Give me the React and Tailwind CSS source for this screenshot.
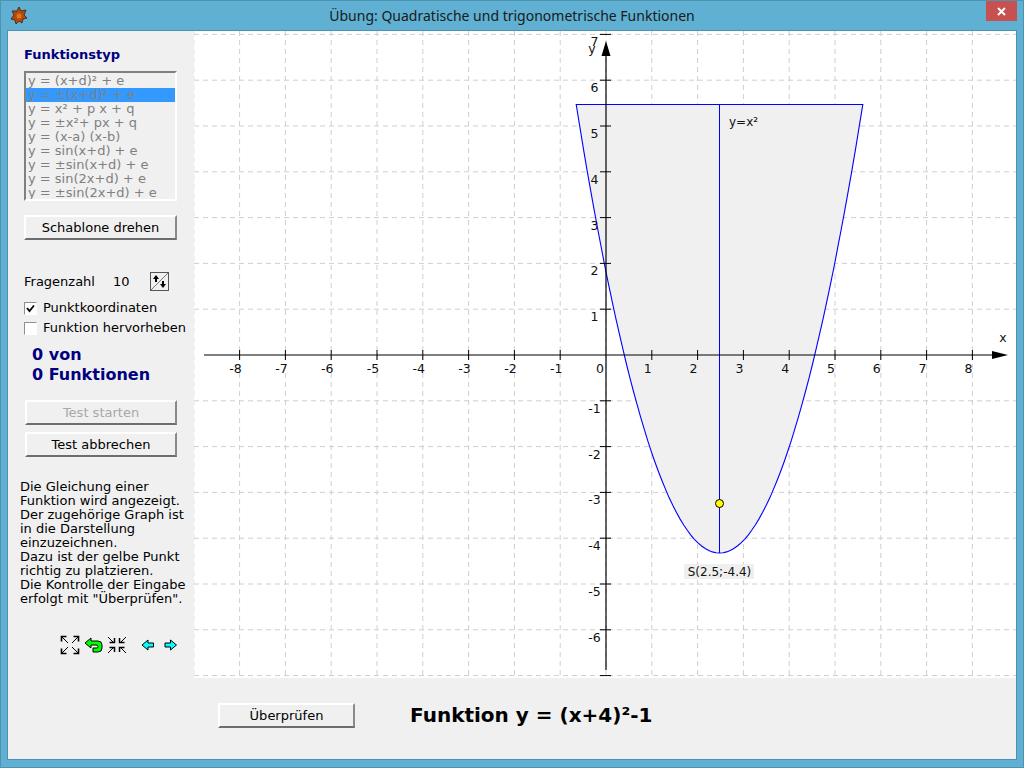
const U = 45.8;
const OX = 412; // origin inside the graph svg (606 - 194)
const OY = 324; // 355 - 31

const funktionen = [
  "y = (x+d)² + e",
  "y = ±(x+d)² + e",
  "y = x² + p x + q",
  "y = ±x²+ px + q",
  "y = (x-a) (x-b)",
  "y = sin(x+d) + e",
  "y = ±sin(x+d) + e",
  "y = sin(2x+d) + e",
  "y = ±sin(2x+d) + e",
];

const VERTEX_X = 525.5;
const VERTEX_Y = 522;
const TOP_Y = 73.5;

function parabola() {
  const half = Math.sqrt((VERTEX_Y - TOP_Y) * U);
  const pts = [];
  for (let i = 0; i <= 80; i++) {
    const x = VERTEX_X - half + (2 * half * i) / 80;
    const y = VERTEX_Y - ((x - VERTEX_X) * (x - VERTEX_X)) / U;
    pts.push(`${x.toFixed(1)},${y.toFixed(1)}`);
  }
  return pts.join(" ");
}

function Graph() {
  const xs = [-9, -8, -7, -6, -5, -4, -3, -2, -1, 0, 1, 2, 3, 4, 5, 6, 7, 8, 9];
  const ys = [-7, -6, -5, -4, -3, -2, -1, 1, 2, 3, 4, 5, 6, 7];
  return (
    <svg width="822" height="647" className="block" style={{ fontFamily: "'DejaVu Sans', sans-serif" }}>
      {xs.map((n) => (
        <line key={n} x1={OX + n * U} x2={OX + n * U} y1="0" y2="647" stroke="#cfcfcf" strokeDasharray="5 4" />
      ))}
      {ys.map((n) => (
        <line key={n} x1="0" x2="822" y1={OY - n * U} y2={OY - n * U} stroke="#cfcfcf" strokeDasharray="5 4" />
      ))}

      <polygon points={parabola()} fill="#efefef" fillOpacity="0.95" stroke="#0000ff" strokeWidth="1.1" />
      <line x1={VERTEX_X} x2={VERTEX_X} y1={TOP_Y} y2={VERTEX_Y} stroke="#0000ff" strokeWidth="1" />

      {/* axes */}
      <line x1="10" x2="800" y1={OY} y2={OY} stroke="#000" strokeWidth="1.2" />
      <line x1={OX} x2={OX} y1="24" y2="639" stroke="#000" strokeWidth="1.2" />
      <polygon points="814,324 798,320 798,328" fill="#000" />
      <polygon points={`${OX},10 ${OX - 4.5},25 ${OX + 4.5},25`} fill="#000" />

      {xs.filter((n) => n !== 0 && Math.abs(n) < 9).map((n) => (
        <g key={n}>
          <line x1={OX + n * U} x2={OX + n * U} y1={OY - 5} y2={OY + 5} stroke="#000" />
          <text x={OX + n * U - 4} y={OY + 18} textAnchor="middle" fontSize="12.5" fill="#111">{n}</text>
        </g>
      ))}
      {ys.map((n) => (
        <g key={n}>
          <line x1={OX - 6} x2={OX + 5} y1={OY - n * U} y2={OY - n * U} stroke="#000" />
          <text x={OX - 11.5} y={OY - n * U + 12} textAnchor="middle" fontSize="12.5" fill="#111">{n}</text>
        </g>
      ))}
      <text x={OX - 6} y={OY + 18} textAnchor="middle" fontSize="12.5" fill="#111">0</text>
      <text x="809" y="311" textAnchor="middle" fontSize="12.5" fill="#111">x</text>
      <text x={OX - 14} y="22" textAnchor="middle" fontSize="12.5" fill="#111">y</text>
      <text x="535" y="95" fontSize="12" fill="#111">y=x²</text>

      <rect x="490" y="533" width="70" height="15" fill="#efefef" />
      <text x={VERTEX_X} y="545" textAnchor="middle" fontSize="12" fill="#111">S(2.5;-4.4)</text>

      <circle cx={VERTEX_X} cy="472.5" r="4" fill="#ffff00" stroke="#000" />
    </svg>
  );
}

function Knopf({ children, disabled, className }) {
  return (
    <button
      className={`h-[25px] bg-[#f0f0f0] border-2 border-t-white border-l-white border-r-[#8a8a8a] border-b-[#6d6d6d] text-[13px] leading-none ${
        disabled ? "text-[#a8a8a8]" : "text-black"
      } ${className}`}
    >
      {children}
    </button>
  );
}

function Haken({ checked, label }) {
  return (
    <div className="flex items-center h-[20px]">
      <span className="w-[13px] h-[13px] bg-white border border-[#8e8f8f] border-b-white border-r-white flex items-center justify-center">
        {checked && (
          <svg width="9" height="9" viewBox="0 0 9 9">
            <path d="M1 4 L3.5 7 L8 1.5" fill="none" stroke="#000" strokeWidth="1.8" />
          </svg>
        )}
      </span>
      <span className="ml-[6px] text-[13px] text-black whitespace-nowrap">{label}</span>
    </div>
  );
}

function Werkzeuge() {
  return (
    <svg width="118" height="20" viewBox="0 0 118 20" className="block">
      {/* vergrößern */}
      <g stroke="#000" fill="none" strokeWidth="1">
        <path d="M2 2 L8 8 M18 2 L12 8 M2 18 L8 12 M18 18 L12 12" />
        <path d="M1.5 6.5 V1.5 H6.5 M13.5 1.5 H18.5 V6.5 M1.5 13.5 V18.5 H6.5 M18.5 13.5 V18.5 H13.5" strokeWidth="1.6" />
      </g>
      {/* zurück */}
      <path
        d="M25 10 L31 5 V8 H38 Q42 8 42 12 V15 Q42 19 38 19 H33 V15 H37 Q38 15 38 13.5 Q38 12 36 12 H31 V15 Z"
        transform="translate(0 -2)"
        fill="#00ff00"
        stroke="#000"
      />
      {/* verkleinern */}
      <g stroke="#000" fill="none" strokeWidth="1">
        <path d="M48 2 L54 8 M66 2 L60 8 M48 18 L54 12 M66 18 L60 12" />
        <path d="M49.5 7.5 H54.5 V3 M59.5 3 V7.5 H64.5 M49.5 12.5 H54.5 V17 M59.5 17 V12.5 H64.5" strokeWidth="1.5" />
      </g>
      {/* Pfeile */}
      <path d="M82 10 L88 5 V8 H93.5 V12 H88 V15 Z" fill="#00ffff" stroke="#000" />
      <path d="M116.5 10 L110.5 5 V8 H105 V12 H110.5 V15 Z" fill="#00ffff" stroke="#000" />
    </svg>
  );
}

function LinkeSeite() {
  return (
    <aside className="w-[186px] shrink-0 bg-[#f0f0f0] flex flex-col pl-[16px]">
      <h2 className="mt-[16px] h-[16px] text-[13px] leading-[16px] font-bold text-[#000080]">Funktionstyp</h2>

      <ul className="mt-[8px] w-[153px] h-[130px] bg-[#f0f0f0] border-2 border-t-[#808080] border-l-[#808080] border-r-white border-b-white overflow-hidden pt-[1px]">
        {funktionen.map((f, i) => (
          <li
            key={f}
            className={`h-[14px] pl-[2px] text-[13px] leading-[14px] text-[#808080] whitespace-nowrap ${
              i === 1 ? "bg-[#3399ff]" : ""
            }`}
          >
            {f}
          </li>
        ))}
      </ul>

      <Knopf className="mt-[14px] w-[153px]">Schablone drehen</Knopf>

      <div className="mt-[32px] h-[19px] flex items-center text-[13px] text-black">
        <span className="w-[89px]">Fragenzahl</span>
        <span className="w-[37px]">10</span>
        <svg width="19" height="19" viewBox="0 0 19 19" className="block">
          <rect x="0.5" y="0.5" width="18" height="18" fill="#f0f0f0" stroke="#555" />
          <path d="M1 18 L18 1" stroke="#777" />
          <path d="M6 3 L9 7 H7 V10 H5 V7 H3 Z M13 16 L16 12 H14 V9 H12 V12 H10 Z" fill="#000" />
        </svg>
      </div>

      <div className="mt-[7px] flex flex-col">
        <Haken checked label="Punktkoordinaten" />
        <Haken label="Funktion hervorheben" />
      </div>

      <div className="mt-[7px] ml-[8px] text-[16px] leading-[20px] font-bold text-[#000080]">
        <div>0 von</div>
        <div>0 Funktionen</div>
      </div>

      <Knopf disabled className="mt-[15px] ml-[1px] w-[152px]">Test starten</Knopf>
      <Knopf className="mt-[7px] ml-[1px] w-[152px]">Test abbrechen</Knopf>

      <p className="mt-[23px] -ml-[4px] text-[13px] leading-[14px] text-black whitespace-nowrap">
        Die Gleichung einer
        <br />
        Funktion wird angezeigt.
        <br />
        Der zugehörige Graph ist
        <br />
        in die Darstellung
        <br />
        einzuzeichnen.
        <br />
        Dazu ist der gelbe Punkt
        <br />
        richtig zu platzieren.
        <br />
        Die Kontrolle der Eingabe
        <br />
        erfolgt mit "Überprüfen".
      </p>

      <div className="mt-[29px] ml-[36px]">
        <Werkzeuge />
      </div>
    </aside>
  );
}

export default function App() {
  return (
    <div
      className="relative w-[1024px] h-[768px] overflow-hidden bg-[#5fb0d2] border border-[#4d93b0] flex flex-col"
      style={{ fontFamily: "'DejaVu Sans', sans-serif" }}
    >
      <header className="h-[29px] shrink-0 flex items-center justify-center">
        <span className="text-[14px] text-[#1a1a1a] pl-[0px]" style={{ fontFamily: "'Noto Sans', sans-serif" }}>
          Übung: Quadratische und trigonometrische Funktionen
        </span>
      </header>

      <svg width="18" height="18" viewBox="0 0 18 18" className="absolute left-[9px] top-[6px]">
        <path d="M9 0 L11 4 L16 3 L14 8 L17 11 L13 12 L12 16 L9 14 L6 17 L5 13 L1 12 L4 8 L2 4 L7 4 Z" fill="#b5480f" stroke="#3d2008" strokeWidth="0.8" />
        <circle cx="9" cy="9" r="2.5" fill="#e0761a" />
      </svg>

      <div className="absolute left-[985px] top-0 w-[31px] h-[20px] bg-[#c75050] flex items-center justify-center">
        <svg width="9" height="9" viewBox="0 0 9 9">
          <path d="M1 1 L8 8 M8 1 L1 8" stroke="#fff" strokeWidth="2" />
        </svg>
      </div>

      <main className="mx-[6px] mb-[7px] flex-1 flex border border-[#4d93b0] min-h-0">
        <LinkeSeite />
        <div className="flex-1 flex flex-col min-w-0">
          <div className="h-[647px] bg-white overflow-hidden">
            <Graph />
          </div>
          <div className="flex-1 bg-[#f0f0f0] flex items-start pl-[24px] pt-[25px]">
            <Knopf className="w-[137px]">Überprüfen</Knopf>
            <span className="ml-[55px] -mt-[1px] text-[20px] leading-[26px] font-bold text-black whitespace-nowrap">
              Funktion y = (x+4)²-1
            </span>
          </div>
        </div>
      </main>
    </div>
  );
}
